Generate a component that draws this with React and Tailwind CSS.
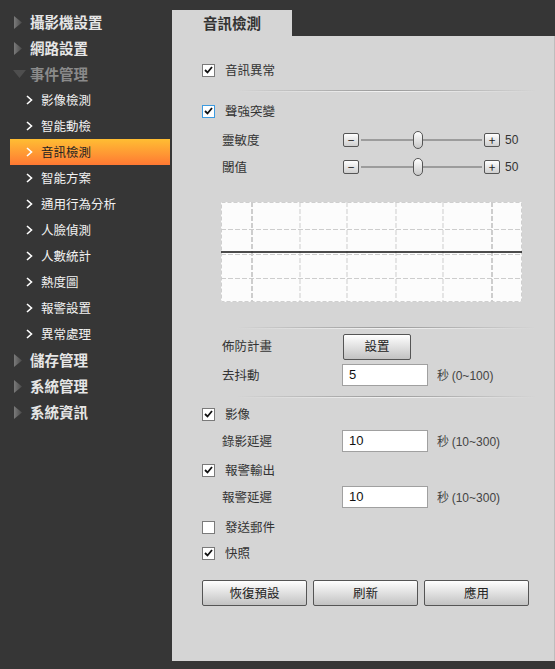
const cjk = { fontFamily: '"Noto Sans CJK TC", "Liberation Sans", sans-serif' }
const num = { fontFamily: '"Liberation Sans", "Noto Sans CJK TC", sans-serif' }

const menu = [
  { label: '攝影機設置', type: 'top' },
  { label: '網路設置', type: 'top' },
  { label: '事件管理', type: 'open' },
  { label: '影像檢測', type: 'sub' },
  { label: '智能動檢', type: 'sub' },
  { label: '音訊檢測', type: 'sub', active: true },
  { label: '智能方案', type: 'sub' },
  { label: '通用行為分析', type: 'sub' },
  { label: '人臉偵測', type: 'sub' },
  { label: '人數統計', type: 'sub' },
  { label: '熱度圖', type: 'sub' },
  { label: '報警設置', type: 'sub' },
  { label: '異常處理', type: 'sub' },
  { label: '儲存管理', type: 'top' },
  { label: '系統管理', type: 'top' },
  { label: '系統資訊', type: 'top' },
]

function MenuRow({ item }) {
  if (item.type === 'sub') {
    return (
      <div
        className={
          'ml-[10px] mr-[2px] flex h-[26px] items-center ' +
          (item.active ? 'bg-gradient-to-b from-[#ffbd33] to-[#ff7833] text-[#222]' : 'text-[#f2f2f2]')
        }
      >
        <svg className="ml-[16px] mr-[8px]" width="7" height="10" viewBox="0 0 7 10">
          <polyline points="1,1 5.5,5 1,9" fill="none" stroke="#fff" strokeWidth="1.6" />
        </svg>
        <span className="text-[12.5px]">{item.label}</span>
      </div>
    )
  }
  return (
    <div className="flex h-[26px] items-center">
      {item.type === 'open' ? (
        <svg className="ml-[13px] mr-[4px]" width="13" height="9" viewBox="0 0 13 9">
          <polygon points="0,0 13,0 6.5,8" fill="#4e4e4e" />
        </svg>
      ) : (
        <svg className="ml-[14px] mr-[8px]" width="8" height="13" viewBox="0 0 8 13">
          <defs>
            <linearGradient id="tri" x1="0" x2="1" y1="0" y2="0">
              <stop offset="0" stopColor="#7a7a7a" />
              <stop offset="1" stopColor="#4a4a4a" />
            </linearGradient>
          </defs>
          <polygon points="0,0 8,6.5 0,13" fill="url(#tri)" />
        </svg>
      )}
      <span className={'text-[14.5px] font-bold ' + (item.type === 'open' ? 'text-[#8a8a8a]' : 'text-[#e6e6e6]')}>
        {item.label}
      </span>
    </div>
  )
}

function Check({ checked, focus }) {
  return (
    <span
      className={
        'inline-flex h-[13px] w-[13px] items-center justify-center border bg-white ' +
        (focus ? 'border-[#3d9be0]' : 'border-[#7a7a7a]')
      }
    >
      {checked && (
        <svg width="9" height="8" viewBox="0 0 9 8">
          <polyline points="1,4 3.5,6.5 8,1" fill="none" stroke="#111" strokeWidth="1.8" />
        </svg>
      )}
    </span>
  )
}

function CheckRow({ label, checked, focus, className }) {
  return (
    <div className={'ml-[30px] flex h-[20px] items-center ' + className}>
      <Check checked={checked} focus={focus} />
      <span className="ml-[10px] text-[12.5px] text-[#333]">{label}</span>
    </div>
  )
}

function Separator({ className }) {
  return (
    <div className={'ml-[65px] mr-[18px] ' + className}>
      <div className="h-px bg-gradient-to-r from-[#d5d5d5] via-[#9a9a9a] to-[#d5d5d5]" />
      <div className="h-px bg-gradient-to-r from-[#d5d5d5] via-[#f2f2f2] to-[#d5d5d5]" />
    </div>
  )
}

function StepBtn({ sign }) {
  return (
    <span className="flex h-[14px] w-[16px] items-center justify-center rounded-[2px] border border-[#555] bg-gradient-to-b from-white to-[#cfcfcf] text-[12px] leading-none text-[#222]">
      {sign}
    </span>
  )
}

function SliderRow({ label, className }) {
  return (
    <div className={'ml-[50px] flex h-[20px] items-center ' + className}>
      <span className="w-[121px] text-[12.5px] text-[#333]">{label}</span>
      <StepBtn sign="−" />
      <div className="relative mx-[2px] h-[2px] w-[121px] bg-[#9c9c9c]">
        <span className="absolute left-[52px] top-[-8px] h-[18px] w-[10px] rounded-[5px] border border-[#555] bg-gradient-to-b from-white to-[#c9c9c9]" />
      </div>
      <StepBtn sign="+" />
      <span className="ml-[5px] text-[12px] text-[#333]" style={num}>50</span>
    </div>
  )
}

function InputRow({ label, value, hint, className }) {
  return (
    <div className={'ml-[50px] flex h-[22px] items-center ' + className}>
      <span className="w-[120px] text-[12.5px] text-[#333]">{label}</span>
      <div className="flex h-[22px] w-[86px] items-center border border-[#a0a0a0] bg-white pl-[6px] text-[13px] text-[#111]" style={num}>
        {value}
      </div>
      <span className="ml-[9px] text-[12px] text-[#444]">
        秒 <span style={num}>{hint}</span>
      </span>
    </div>
  )
}

function Graph() {
  const xs = [31, 79, 126, 175, 222, 271]
  return (
    <svg className="ml-[49px] mt-[25px] block" width="301" height="100" viewBox="0 0 301 100">
      <rect x="0" y="0" width="301" height="100" fill="#fcfcfc" />
      <rect x="0.5" y="0.5" width="300" height="99" fill="none" stroke="#cfcfcf" strokeDasharray="4 2" />
      {xs.map((x, i) => (
        <line
          key={x}
          x1={x}
          x2={x}
          y1="0"
          y2="100"
          stroke="#cdcdcd"
          strokeWidth={i === 0 || i === 5 ? 2 : 1}
          strokeDasharray="5 2"
        />
      ))}
      {[27.5, 52.5, 76.5].map((y) => (
        <line key={y} x1="0" x2="301" y1={y} y2={y} stroke="#cdcdcd" strokeDasharray="5 2" />
      ))}
      <line x1="0" x2="301" y1="50" y2="50" stroke="#111" strokeWidth="1.5" />
    </svg>
  )
}

function Btn({ children, className }) {
  return (
    <button className={'h-[26px] rounded-[2px] border border-[#555] bg-gradient-to-b from-white to-[#c2c2c2] text-[12.5px] text-[#222] ' + className}>
      {children}
    </button>
  )
}

export default function App() {
  return (
    <div className="flex h-[669px] w-[555px] bg-[#363636]" style={cjk}>
      <aside className="w-[172px] shrink-0 pt-[9px]">
        {menu.map((item) => (
          <MenuRow key={item.label} item={item} />
        ))}
      </aside>
      <main className="flex flex-1 flex-col pt-[10px] pb-[8px]">
        <div className="flex h-[26px] w-[120px] items-center bg-[#d5d5d5] pl-[31px] text-[14.5px] font-bold text-[#333]">
          音訊檢測
        </div>
        <div className="flex-1 border-r border-[#bdbdbd] bg-[#d5d5d5]">
          <CheckRow label="音訊異常" checked className="mt-[24px]" />
          <Separator className="mt-[10px]" />
          <CheckRow label="聲強突變" checked focus className="mt-[9px]" />
          <SliderRow label="靈敏度" className="mt-[9px]" />
          <SliderRow label="閾值" className="mt-[7px]" />
          <Graph />
          <Separator className="mt-[25px]" />
          <div className="ml-[50px] mt-[5px] flex h-[25px] items-center">
            <span className="w-[121px] text-[12.5px] text-[#333]">佈防計畫</span>
            <Btn className="w-[68px]">設置</Btn>
          </div>
          <InputRow label="去抖動" value="5" hint="(0~100)" className="mt-[5px]" />
          <Separator className="mt-[10px]" />
          <CheckRow label="影像" checked className="mt-[6px]" />
          <InputRow label="錄影延遲" value="10" hint="(10~300)" className="mt-[6px]" />
          <CheckRow label="報警輸出" checked className="mt-[8px]" />
          <InputRow label="報警延遲" value="10" hint="(10~300)" className="mt-[6px]" />
          <CheckRow label="發送郵件" className="mt-[9px]" />
          <CheckRow label="快照" checked className="mt-[6px]" />
          <div className="ml-[30px] mt-[17px] flex gap-[6px]">
            <Btn className="w-[105px]">恢復預設</Btn>
            <Btn className="w-[105px]">刷新</Btn>
            <Btn className="w-[105px]">應用</Btn>
          </div>
        </div>
      </main>
    </div>
  )
}
